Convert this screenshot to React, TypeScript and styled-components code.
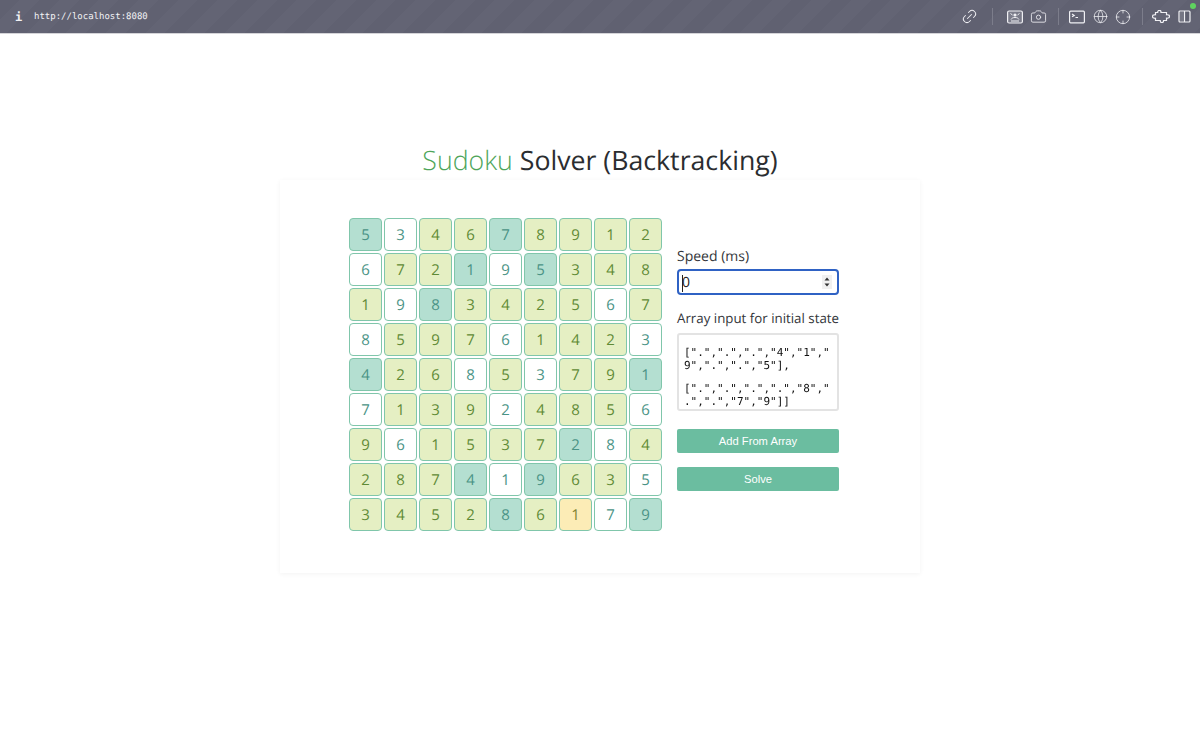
import React from "react";
import styled, { createGlobalStyle } from "styled-components";
import { Link2, Camera, Globe, Crosshair } from "lucide-react";

const Global = createGlobalStyle`
  html, body { margin: 0; padding: 0; background: #fff; height: 100%; overflow: hidden; }
  body { font-family: "Open Sans", sans-serif; text-rendering: geometricPrecision; }
  * { box-sizing: border-box; }
`;

const Page = styled.div`
  width: 1200px;
  height: 750px;
  display: flex;
  flex-direction: column;
  align-items: center;
  background: #fff;
`;

const Toolbar = styled.header`
  width: 100%;
  height: 34px;
  flex: none;
  display: flex;
  align-items: center;
  padding: 0 4.5px 0 15px;
  color: #f2f2f5;
  background: repeating-linear-gradient(135deg, #606171 0 14px, #636474 14px 28px);
  border-bottom: 1px solid #d4d4d8;
  position: relative;
`;

const InfoMark = styled.span`
  font: bold 12px "DejaVu Sans Mono", monospace;
  width: 19px;
`;

const Url = styled.span`
  font: 9px "DejaVu Sans Mono", monospace;
  flex: 1;
`;

const IconSlot = styled.span`
  width: 23px;
  height: 18px;
  display: flex;
  align-items: center;
  justify-content: center;
`;

const Divider = styled.span<{ $m: string }>`
  width: 1px;
  height: 17px;
  background: #7c7d8b;
  margin: ${(p) => p.$m};
`;

const StatusDot = styled.span`
  position: absolute;
  top: 3px;
  right: 4px;
  width: 6px;
  height: 6px;
  border-radius: 50%;
  background: #5fd35f;
`;

const Title = styled.h1`
  margin: 107px 0 0;
  height: 38px;
  font-size: 26.7px;
  line-height: 38px;
  font-weight: 400;
  color: #2b2d30;
  white-space: nowrap;
`;

const Accent = styled.span`
  color: #4ea55a;
  font-weight: 300;
`;

const Card = styled.main`
  width: 640px;
  height: 393px;
  margin-top: 1px;
  padding: 38px 81px 0 69px;
  display: flex;
  justify-content: space-between;
  background: #fff;
  box-shadow: 0 1px 5px rgba(0, 0, 0, 0.05);
`;

const Board = styled.div`
  display: grid;
  grid-template-columns: repeat(9, 33px);
  grid-auto-rows: 33px;
  gap: 2px;
  align-content: start;
`;

const palette = {
  T: { bg: "#b4dfd1", fg: "#4a9385" },
  W: { bg: "#ffffff", fg: "#4a9385" },
  G: { bg: "#e5efc3", fg: "#5f8a35" },
  Y: { bg: "#fcecb6", fg: "#7f8430" },
};
type Kind = keyof typeof palette;

const Cell = styled.div<{ $k: Kind }>`
  display: flex;
  align-items: center;
  justify-content: center;
  border: 1px solid #80c6ab;
  border-radius: 4px;
  font-size: 15px;
  background: ${(p) => palette[p.$k].bg};
  color: ${(p) => palette[p.$k].fg};
`;

const Side = styled.aside`
  width: 162px;
  padding-top: 29px;
  display: flex;
  flex-direction: column;
`;

const Label = styled.label<{ $size: number; $gap: number }>`
  font-size: ${(p) => p.$size}px;
  line-height: 19px;
  color: #33363a;
  margin-bottom: ${(p) => p.$gap}px;
  white-space: nowrap;
`;

const SpeedBox = styled.div`
  height: 26px;
  border: 2px solid #2f62c4;
  border-radius: 4px;
  display: flex;
  align-items: center;
  justify-content: space-between;
  padding: 0 5px 0 3px;
  margin-bottom: 14px;
  font-size: 14px;
  color: #222;
`;

const SpeedValue = styled.span`
  position: relative;
`;

const Caret = styled.span`
  position: absolute;
  left: 0;
  top: 2px;
  width: 1px;
  height: 17px;
  background: #222;
`;

const Spinner = styled.svg`
  width: 10px;
  height: 14px;
  background: #f0f0f0;
`;

const ArrayBox = styled.div`
  height: 78px;
  border: 2px solid #e3e3e3;
  border-radius: 3px;
  padding: 11px 4px 0 5px;
  overflow: hidden;
  font: 11px/13px "DejaVu Sans Mono", monospace;
  color: #111;
  margin-bottom: 18px;
  will-change: transform;
`;

const ArrayRow = styled.div`
  margin-bottom: 10px;
  white-space: pre;
`;

const ArrayLine = styled.div`
  height: 13px;
`;

const Action = styled.button`
  height: 24px;
  border: 0;
  border-radius: 2px;
  background: #6bbda0;
  color: #fff;
  font: 11.2px "Liberation Sans", sans-serif;
  margin-bottom: 14px;
  padding: 0;
`;

const board: [string, string][] = [
  ["534678912", "TWGGTGGGG"],
  ["672195348", "WGGTWTGGG"],
  ["198342567", "GWTGGGGWG"],
  ["859761423", "WGGGWGGGW"],
  ["426853791", "TGGWGWGGT"],
  ["713924856", "WGGGWGGGW"],
  ["961537284", "GWGGGGTWG"],
  ["287419635", "GGGTWTGGW"],
  ["345286179", "GGGGTGYWT"],
];

const stroke = { fill: "none", stroke: "#f0f0f4", strokeWidth: 1.2 } as const;

export default function App() {
  return (
    <Page>
      <Global />
      <Toolbar>
        <InfoMark>i</InfoMark>
        <Url>http://localhost:8080</Url>
        <IconSlot>
          <Link2 size={17} color="#f0f0f4" strokeWidth={1.4} style={{ transform: "rotate(-45deg)" }} />
        </IconSlot>
        <Divider $m="0 11px" />
        <IconSlot>
          <svg width="16" height="14" viewBox="0 0 16 14" {...stroke}>
            <rect x="0.6" y="1" width="14.8" height="12" rx="1.5" fill="#f0f0f4" fillOpacity="0.18" />
            <path d="M4 9.5c.8-1.4 2-2 4-2s3.2.6 4 2" strokeWidth="1" />
            <circle cx="8" cy="5" r="1.6" fill="#f0f0f4" stroke="none" />
            <path d="M3.5 3.5l2 1.5M12.5 3.5l-2 1.5M4 11h8" strokeWidth="1" />
          </svg>
        </IconSlot>
        <IconSlot>
          <Camera size={17} color="#f0f0f4" strokeWidth={1.2} />
        </IconSlot>
        <Divider $m="0 7px 0 8px" />
        <IconSlot>
          <svg width="16" height="14" viewBox="0 0 16 14" {...stroke}>
            <rect x="0.6" y="1.2" width="14.8" height="11.6" rx="1" />
            <path d="M3 4l2.2 1.4L3 6.8M6.5 7.5h2.5" />
          </svg>
        </IconSlot>
        <IconSlot>
          <Globe size={15} color="#f0f0f4" strokeWidth={1.2} />
        </IconSlot>
        <IconSlot>
          <Crosshair size={16} color="#f0f0f4" strokeWidth={1.2} />
        </IconSlot>
        <Divider $m="0 7px" />
        <IconSlot>
          <svg width="18" height="13" viewBox="0 0 18 13" {...stroke}>
            <path d="M3.5 2.5h2.2a1.9 1.9 0 0 1 0-.5A1.6 1.6 0 0 1 9 2a1.9 1.9 0 0 1 0 .5h2.5 3v2.2a1.9 1.9 0 0 1 1.4.1 1.6 1.6 0 0 1 0 3.2 1.9 1.9 0 0 1-1.4.2v2.3h-3a1.9 1.9 0 0 0 0 .5 1.6 1.6 0 0 1-3.2 0 1.9 1.9 0 0 0 0-.5H3.5V8.3a1.9 1.9 0 0 1-1.4-.2 1.6 1.6 0 0 1 0-3.2 1.9 1.9 0 0 1 1.4-.1z" />
          </svg>
        </IconSlot>
        <IconSlot>
          <svg width="13" height="13" viewBox="0 0 13 13" {...stroke}>
            <rect x="1" y="1" width="11" height="11" rx="1" />
            <path d="M6.5 1v11" />
            <path d="M2 2h3.5v9H2z" fill="#f0f0f4" fillOpacity="0.15" stroke="none" />
          </svg>
        </IconSlot>
        <StatusDot />
      </Toolbar>
      <Title>
        <Accent>Sudoku</Accent> Solver (Backtracking)
      </Title>
      <Card>
        <Board>
          {board.flatMap(([digits, kinds], r) =>
            digits.split("").map((d, c) => (
              <Cell key={`${r}-${c}`} $k={kinds[c] as Kind}>
                {d}
              </Cell>
            ))
          )}
        </Board>
        <Side>
          <Label $size={14} $gap={3}>Speed (ms)</Label>
          <SpeedBox>
            <SpeedValue>
              <Caret />0
            </SpeedValue>
            <Spinner viewBox="0 0 10 14">
              <path d="M5 2.5L7.5 5.5h-5zM5 11.5L2.5 8.5h5z" fill="#333" />
            </Spinner>
          </SpeedBox>
          <Label $size={13.3} $gap={5}>Array input for initial state</Label>
          <ArrayBox>
            <ArrayRow>
              <ArrayLine>{'[".",".",".","4","1","'}</ArrayLine>
              <ArrayLine>{'9",".",".","5"],'}</ArrayLine>
            </ArrayRow>
            <ArrayRow>
              <ArrayLine>{'[".",".",".",".","8","'}</ArrayLine>
              <ArrayLine>{'.",".","7","9"]]'}</ArrayLine>
            </ArrayRow>
          </ArrayBox>
          <Action>Add From Array</Action>
          <Action>Solve</Action>
        </Side>
      </Card>
    </Page>
  );
}
